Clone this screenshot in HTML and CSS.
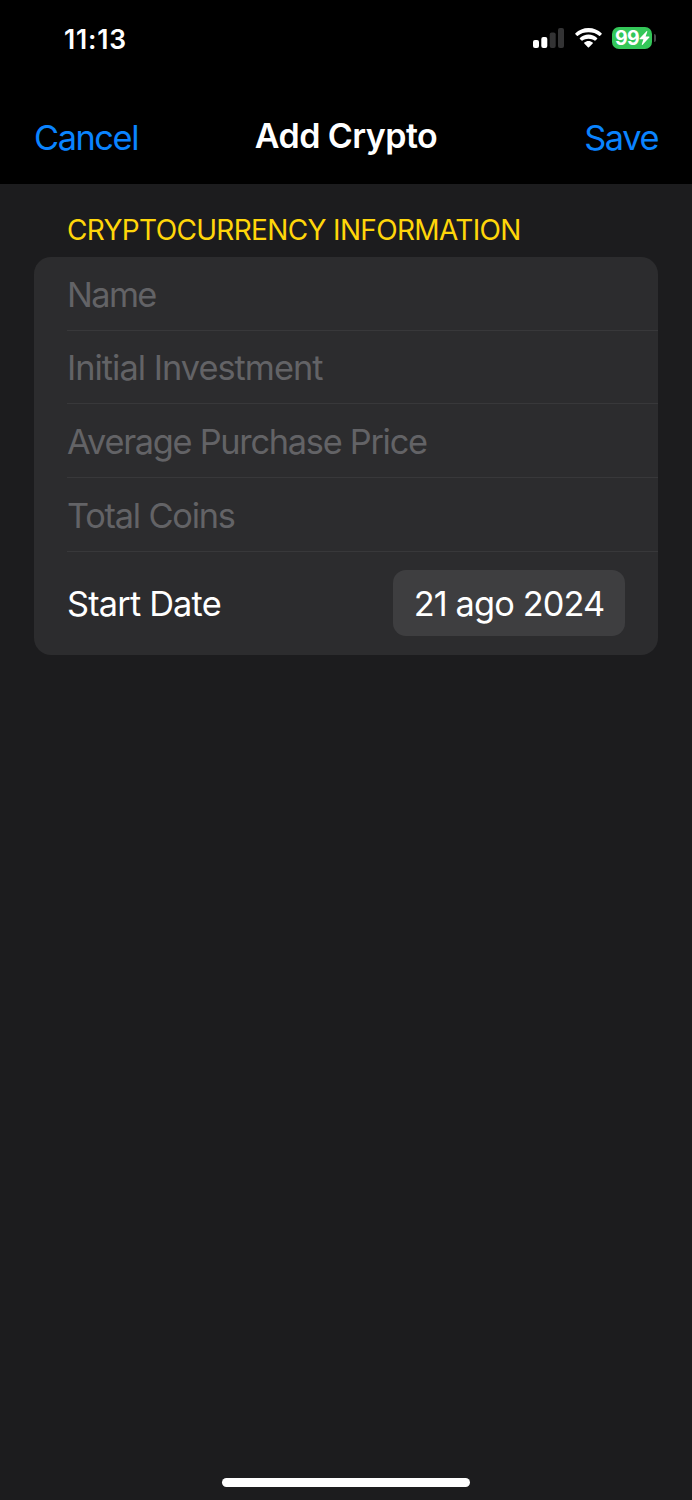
FILE: index.html
```html
<!DOCTYPE html>
<html lang="en">
<head>
<meta charset="utf-8">
<title>Add Crypto</title>
<link rel="stylesheet" href="styles.css">
</head>
<body>
<div class="screen">
  <header class="top">
    <div class="status">
      <span class="time">11:13</span>
      <div class="indicators">
        <svg class="signal" width="32" height="20" viewBox="0 0 32 20">
          <rect x="0" y="12" width="6" height="8" rx="2" fill="#fff"/>
          <rect x="8.3" y="9" width="6" height="11" rx="2" fill="#fff"/>
          <rect x="16.7" y="4.500" width="6" height="15.500" rx="2" fill="#333334"/>
          <rect x="25" y="0" width="6" height="20" rx="2" fill="#333334"/>
        </svg>
        <svg class="wifi" width="27" height="20" viewBox="0 0 27 20">
          <path fill="#fff" d="M13.500 0C8.400 0 3.800 2 .4 5.200c-.3.300-.3.700 0 1l1.500 1.600c.3.300.7.300 1 0C5.700 5.400 9.400 4.300 13.500 4.300s7.800 1.100 10.600 3.500c.3.300.7.300 1 0l1.500-1.600c.3-.3.300-.7 0-1C23.200 2 18.600 0 13.500 0z"/>
          <path fill="#fff" d="M13.500 6.600c-3.300 0-6.300 1.300-8.600 3.400-.3.300-.3.700 0 1l1.700 1.600c.3.300.6.300.9 0 1.600-1.200 3.700-1.900 6-1.900s4.400.7 6 1.900c.3.300.6.300.9 0l1.700-1.600c.3-.3.300-.7 0-1-2.300-2.100-5.300-3.400-8.600-3.400z"/>
          <path fill="#fff" d="M13.500 13c-1.600 0-3 .6-4.200 1.600-.3.300-.3.600 0 .9l3.600 3.800c.3.300.8.300 1.100 0l3.700-3.800c.3-.3.300-.6 0-.9-1.200-1-2.600-1.600-4.200-1.600z"/>
        </svg>
        <div class="battery">
          <span class="level">99</span>
          <svg class="bolt" width="11" height="14" viewBox="0 0 11 14"><path fill="#fff" d="M7.500.2.600 7.400c-.4.400-.2.900.3.900h3.500L2.800 13.200c-.2.600.4.900.8.500l6.700-7.200c.4-.4.200-.9-.3-.9H6.600L8.300.8c.2-.6-.4-1-.8-.6z"/></svg>
        </div>
        <span class="nub"></span>
      </div>
    </div>
    <nav class="navbar">
      <span class="action cancel">Cancel</span>
      <h1 class="title">Add Crypto</h1>
      <span class="action save">Save</span>
    </nav>
  </header>
  <main class="content">
    <h2 class="section-title">CRYPTOCURRENCY INFORMATION</h2>
    <div class="card">
      <div class="row"><span class="field name">Name</span></div>
      <div class="row"><span class="field initial">Initial Investment</span></div>
      <div class="row"><span class="field average">Average Purchase Price</span></div>
      <div class="row"><span class="field total">Total Coins</span></div>
      <div class="row date-row">
        <span class="label">Start Date</span>
        <span class="date">21 ago 2024</span>
      </div>
    </div>
  </main>
  <div class="home"></div>
</div>
</body>
</html>
```
FILE: styles.css
```css
* { box-sizing: border-box; }
body { margin: 0; background: #1c1c1e; font-family: Inter, "Liberation Sans", sans-serif; color: #fff; font-size: 34.3px; line-height: 42px; }
.screen { width: 692px; height: 1500px; display: flex; flex-direction: column; overflow: hidden; }
.top { height: 184px; background: #000; }
.status { height: 76px; padding: 0 36px 0 64px; display: flex; justify-content: space-between; align-items: center; }
.time { padding-top: 2px; font-size: 26.500px; font-weight: 600; letter-spacing: 0.8px; }
.indicators { display: flex; align-items: center; }
.signal { margin-right: 10px; }
.wifi { margin-right: 10px; }
.battery { width: 40px; height: 22px; border-radius: 7px; background: #34c759; display: flex; align-items: center; padding-left: 3px; }
.level { font-size: 19.5px; font-weight: 700; line-height: 22px; letter-spacing: -0.6px; }
.nub { width: 2px; height: 8px; margin-left: 2px; border-radius: 0 2px 2px 0; background: #48484a; }
.navbar { height: 108px; padding: 41px 34px 0; display: grid; grid-template-columns: 1fr auto 1fr; align-items: start; }
.action { color: #0a84ff; letter-spacing: -1.4px; }
.save { text-align: right; }
.title { margin: -2px 0 0; font-size: 34px; font-weight: 600; letter-spacing: -0.55px; }
.content { flex: 1; padding: 29px 34px 0; }
.section-title { margin: 0 0 10px; padding-left: 33px; font-size: 28px; font-weight: 400; line-height: 34px; letter-spacing: -0.66px; color: #ffd60a; }
.card { background: #2c2c2e; border-radius: 17px; padding-left: 33px; }
.row { height: 73.670px; padding-top: 3px; display: flex; align-items: center; border-bottom: 1px solid #38383a; }
.field { color: #636366; }
.name { letter-spacing: -1.6px; }
.initial { letter-spacing: -0.97px; }
.average { letter-spacing: -1.26px; }
.total { letter-spacing: -1.2px; }
.label { padding-top: 1px; letter-spacing: -0.8px; }
.date-row { height: 103px; padding: 0 33px 0 0; border: 0; justify-content: space-between; }
.date { width: 232px; height: 66px; padding-top: 1px; border-radius: 13px; background: #3e3e40; display: flex; align-items: center; justify-content: center; letter-spacing: -0.87px; }
.home { width: 248px; height: 9px; margin: 0 auto 13px; border-radius: 5px; background: #fff; }
```
